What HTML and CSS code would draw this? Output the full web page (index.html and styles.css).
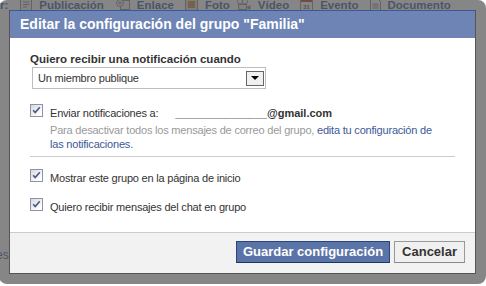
FILE: index.html
```html
<!DOCTYPE html>
<html lang="es">
<head>
<meta charset="utf-8">
<title>Editar la configuración del grupo</title>
<link rel="stylesheet" href="styles.css">
</head>
<body>
<div class="page">
  <!-- composer bar behind the dialog -->
  <div class="toolbar">
    <span class="lead">r:</span>
    <a class="tool t1">
      <svg width="12" height="13" viewBox="0 0 12 13"><rect x=".5" y=".5" width="11" height="12" fill="#f4f4f4" stroke="#8a8a8a"/><path d="M3 4h6M3 6.5h6M3 9h4" stroke="#8a8a8a"/></svg>
      Publicación
    </a>
    <a class="tool t2">
      <svg width="15" height="13" viewBox="0 0 15 13"><rect x="5.5" y="2.5" width="9" height="9" fill="#f4f4f4" stroke="#8a8a8a"/><circle cx="5" cy="5" r="3.5" fill="#fff" stroke="#8a8a8a"/><path d="M3 5h4M5 3v4" stroke="#8a8a8a"/></svg>
      Enlace
    </a>
    <a class="tool t3">
      <svg width="13" height="13" viewBox="0 0 13 13"><rect x=".5" y=".5" width="12" height="12" fill="#ddd" stroke="#8a8a8a"/><rect x="3" y="3" width="7" height="7" fill="#c8862c"/></svg>
      Foto
    </a>
    <a class="tool t4">
      <svg width="15" height="13" viewBox="0 0 15 13"><circle cx="4" cy="3.5" r="2.5" fill="none" stroke="#8a8a8a"/><circle cx="9" cy="3.5" r="2.5" fill="none" stroke="#8a8a8a"/><rect x="2.5" y="6.5" width="8" height="5" fill="#eee" stroke="#8a8a8a"/><path d="M10.5 9l4-2v5l-4-2z" fill="#8a8a8a"/></svg>
      Vídeo
    </a>
    <a class="tool t5">
      <svg width="13" height="13" viewBox="0 0 13 13"><rect x=".5" y=".5" width="12" height="12" fill="#fff" stroke="#8a8a8a"/><rect x="1" y="1" width="11" height="3" fill="#c0392b"/><text x="6.5" y="11" font-size="6" text-anchor="middle" fill="#555" font-family="Liberation Sans, sans-serif">31</text></svg>
      Evento
    </a>
    <a class="tool t6">
      <svg width="11" height="13" viewBox="0 0 11 13"><path d="M.5.5h7l3 3v9H.5z" fill="#fff" stroke="#8a8a8a"/><path d="M2.5 6h6M2.5 8h6M2.5 10h6" stroke="#8a8a8a"/></svg>
      Documento
    </a>
  </div>
  <div class="page-note">es</div>
</div>

<div class="dialog">
  <div class="dialog-inner">
    <h2 class="dialog-title">Editar la configuración del grupo "Familia"</h2>

    <div class="dialog-body">
      <div class="field-label">Quiero recibir una notificación cuando</div>
      <div class="select">
        <span class="select-val">Un miembro publique</span>
        <span class="select-btn"><svg width="8" height="4" viewBox="0 0 8 4"><path d="M0 0h8L4 4z" fill="#000"/></svg></span>
      </div>

      <div class="opt first">
        <span class="cb"><svg width="11" height="11" viewBox="0 0 11 11"><path d="M2.2 5.2l2 2.3L8.8 2.2" fill="none" stroke="#4a5a8e" stroke-width="1.7"/></svg></span>
        <span>Enviar notificaciones a: <b class="email">_______________@gmail.com</b></span>
      </div>
      <p class="hint">Para desactivar todos los mensajes de correo del grupo, <a href="#">edita tu configuración de<br>las notificaciones.</a></p>

      <hr class="sep">

      <div class="opt">
        <span class="cb"><svg width="11" height="11" viewBox="0 0 11 11"><path d="M2.2 5.2l2 2.3L8.8 2.2" fill="none" stroke="#4a5a8e" stroke-width="1.7"/></svg></span>
        <span>Mostrar este grupo en la página de inicio</span>
      </div>
      <div class="opt">
        <span class="cb"><svg width="11" height="11" viewBox="0 0 11 11"><path d="M2.2 5.2l2 2.3L8.8 2.2" fill="none" stroke="#4a5a8e" stroke-width="1.7"/></svg></span>
        <span>Quiero recibir mensajes del chat en grupo</span>
      </div>
    </div>

    <div class="dialog-foot">
      <button type="button" class="btn btn-primary">Guardar configuración</button>
      <button type="button" class="btn btn-cancel">Cancelar</button>
    </div>
  </div>
</div>
</body>
</html>
```

FILE: styles.css
```css
:root{--fb:#3b5998;--head:#6d84b4;--txt:#333;--muted:#999;--line:#ccc}
*{box-sizing:border-box}
body{margin:0;background:#fff;color:var(--txt);font-family:"Liberation Sans",Arial,sans-serif;font-size:11px;overflow:hidden}

/* page behind the overlay */
.page{height:286px;display:flex;flex-direction:column}
.toolbar{display:flex;align-items:center;height:13px;margin-top:-2px;font-size:11.5px;font-weight:bold;color:var(--fb);white-space:nowrap}
.tool{display:flex;align-items:center;gap:7px;color:var(--fb)}
.tool svg{flex:none}
.t1{margin-left:12px}
.t2,.t3,.t5,.t6{margin-left:11px}
.t4{margin-left:6px}
.page-note{margin-top:auto;margin-bottom:24px;margin-left:-4px;color:var(--fb);font-size:12px}

/* dialog */
.dialog{position:absolute;left:-1px;top:0;padding:10px;background:rgba(82,82,82,.7);border-radius:8px}
.dialog-inner{width:467px;background:#fff;border:1px solid #555;border-top:0}
.dialog-title{margin:0;background:var(--head);border-top:1px solid var(--fb);color:#fff;font-size:14px;font-weight:bold;line-height:18px;padding:4px 10px 5px}

.dialog-body{padding:14px 20px 18px;letter-spacing:-.2px}
.field-label{font-weight:bold;font-size:11.5px;line-height:14px;letter-spacing:0}
.select{display:flex;align-items:center;width:234px;height:22px;margin:1px 0 0 2px;border:1px solid #bdbdbd;background:#fff}
.select-val{flex:1;padding-left:5px}
.select-btn{display:flex;align-items:center;justify-content:center;width:18px;height:15px;margin-right:1px;border:1px solid #666;background:#f0f0f0}

.opt{display:flex;align-items:flex-start;gap:7px;line-height:14px;margin-top:15px}
.opt.first{margin-top:17px}
.cb{flex:none;display:flex;align-items:center;justify-content:center;width:13px;height:13px;margin-top:-2px;border:1px solid #8d92a8;background:linear-gradient(135deg,#d8d8dc,#fff 80%)}
.email{font-weight:bold;margin-left:14px;letter-spacing:0}
.hint{margin:3px 0 0;padding-left:20px;color:var(--muted);line-height:14px}
.hint a{color:var(--fb);text-decoration:none}
.sep{height:0;margin:5px 0 0;border:0;border-top:1px solid var(--line)}
.sep + .opt{margin-top:14px}

.dialog-foot{display:flex;justify-content:flex-end;gap:4px;padding:8px 10px 10px;background:#f2f2f2;border-top:1px solid var(--line)}
.btn{appearance:none;height:22px;margin:0;padding:0 6px;border:1px solid;font:bold 13px/20px "Liberation Sans",Arial,sans-serif;cursor:pointer}
.btn-primary{background:#5b74a8;border-color:#29447e #29447e #1a356e;color:#fff}
.btn-cancel{padding:0 7px;background:#f0f0f0;border-color:#999 #999 #888;color:#333}
```
